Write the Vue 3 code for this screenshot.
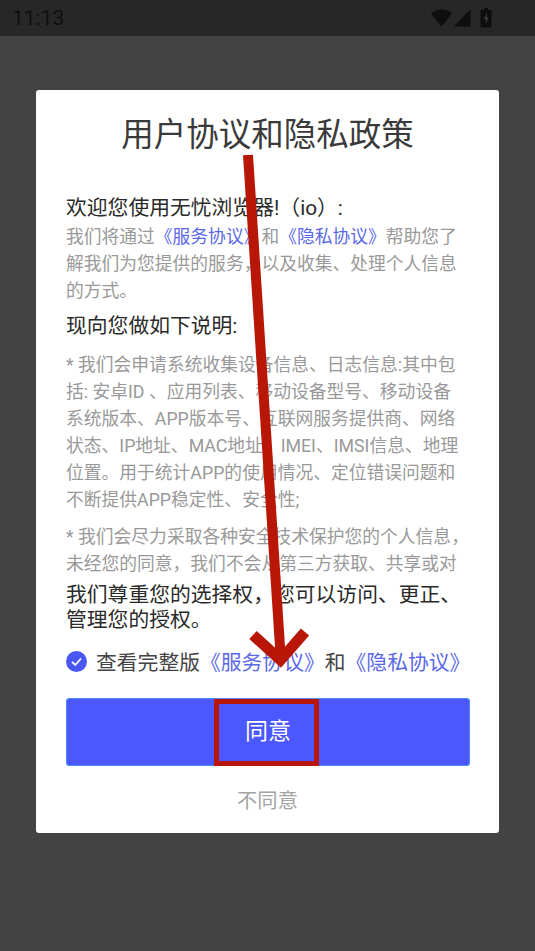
<script setup>
const intro = '我们将通过'
</script>

<template>
  <div class="screen">
    <header class="status">
      <span class="time">11:13</span>
      <div class="status-icons">
        <svg width="21" height="18" viewBox="0 0 21 18"><path d="M0 4.5C3 1.8 6.500 .5 10.500 .5S18 1.800 21 4.500L10.500 17.500Z" fill="#0e0e0e"/></svg>
        <svg width="18" height="18" viewBox="0 0 18 18"><path d="M17.500 .5V17.500H.5Z" fill="#0e0e0e"/></svg>
        <svg class="batt" width="12" height="20" viewBox="0 0 12 20"><path d="M4 0H8V2H11.500V19.500H.5V2H4Z" fill="#0e0e0e"/><path d="M6.800 4.500 3.800 11H5.800V16L8.500 9.500H6.500Z" fill="#3d3d3d"/></svg>
      </div>
    </header>

    <main class="stage">
      <section class="card">
        <h1 class="title">用户协议和隐私政策</h1>

        <div class="scroll">
          <p class="lead">欢迎您使用无忧浏览器!（io）:</p>
          <p class="muted">{{ intro }}<a>《服务协议》</a>和<a>《隐私协议》</a>帮助您了解我们为您提供的服务，以及收集、处理个人信息的方式。</p>
          <p class="lead second">现向您做如下说明:</p>
          <p class="muted item">* 我们会申请系统收集设备信息、日志信息:其中包括: 安卓ID 、应用列表、移动设备型号、移动设备系统版本、APP版本号、互联网服务提供商、网络状态、IP地址、MAC地址、IMEI、IMSI信息、地理位置。用于统计APP的使用情况、定位错误问题和不断提供APP稳定性、安全性;</p>
          <p class="muted next">* 我们会尽力采取各种安全技术保护您的个人信息，未经您的同意，我们不会从第三方获取、共享或对外提供您的信息;</p>
        </div>

        <p class="choice">我们尊重您的选择权，您可以访问、更正、管理您的授权。</p>

        <div class="check-row">
          <svg class="check" width="21" height="21" viewBox="0 0 21 21">
            <circle cx="10.500" cy="10.500" r="10.500" fill="#4b57f5"/>
            <path d="M6 10.800 9.300 14 15 7.500" fill="none" stroke="#fff" stroke-width="1.800"/>
          </svg>
          <span>查看完整版<a>《服务协议》</a>和<a>《隐私协议》</a></span>
        </div>

        <button class="agree">同意</button>
        <button class="decline">不同意</button>
      </section>
    </main>

    <svg class="annotation" width="535" height="951" viewBox="0 0 535 951">
      <path d="M248 155 281 662" fill="none" stroke="#b81607" stroke-width="10"/>
      <path d="M253 635 280.500 660 305 632" fill="none" stroke="#b81607" stroke-width="11"/>
      <rect x="216.500" y="701.500" width="100" height="62" fill="none" stroke="#b81607" stroke-width="5"/>
    </svg>
  </div>
</template>

<style>
html, body { margin: 0; padding: 0; }
</style>

<style scoped>
.screen {
  position: relative;
  width: 535px;
  height: 951px;
  overflow: hidden;
  display: flex;
  flex-direction: column;
  background: #434343;
  font-family: Roboto, "Noto Sans CJK SC", sans-serif;
}
.status {
  height: 36px;
  flex: none;
  display: flex;
  align-items: center;
  justify-content: space-between;
  padding: 0 43px 0 12px;
  background: #272727;
  box-sizing: border-box;
}
.time {
  font-size: 21px;
  color: #0f0f0f;
}
.status-icons { display: flex; align-items: center; gap: 0; }
.status-icons svg:first-child { margin-right: 1px; }
.batt { margin-left: 9px; }
.stage { flex: 1; padding: 54px 36px 0; }
.card {
  height: 743px;
  box-sizing: border-box;
  background: #fff;
  border-radius: 3px;
  padding: 0 30px;
  display: flex;
  flex-direction: column;
}
.title {
  margin: 19px 0 0;
  height: 52px;
  line-height: 52px;
  font-size: 32.500px;
  font-weight: 400;
  text-align: center;
  color: #3a3a3a;
  white-space: nowrap;
}
.scroll {
  height: 386px;
  margin-top: 31px;
  overflow: hidden;
  flex: none;
}
p { margin: 0; }
.lead {
  font-size: 20.800px;
  line-height: 32px;
  color: #2a2a2a;
}
.second { margin-top: 5px; }
.muted {
  font-size: 17.780px;
  line-height: 27px;
  color: #999;
}
.item { margin-top: 10px; max-width: 402px; }
.next { margin-top: 10px; }
a { color: #5a68e8; }
.choice {
  font-size: 20.800px;
  line-height: 25px;
  color: #2a2a2a;
  margin-top: 5px;
}
.check-row {
  display: flex;
  align-items: center;
  gap: 9px;
  margin-top: 11px;
  height: 34px;
  font-size: 20.800px;
  color: #444;
  white-space: nowrap;
}
.check { flex: none; }
.agree {
  width: 404px;
  height: 68px;
  margin-top: 20px;
  flex: none;
  padding: 0 0 6px;
  box-sizing: border-box;
  background: #4b57ff;
  border: 1px solid #4a8dfa;
  border-radius: 3px;
  font: inherit;
  font-size: 23px;
  color: #fff;
}
.decline {
  background: none;
  border: 0;
  padding: 0;
  margin-top: 18px;
  font: inherit;
  font-size: 20.300px;
  line-height: 34px;
  color: #a3a3a3;
}
.annotation {
  position: absolute;
  left: 0;
  top: 0;
  pointer-events: none;
}
</style>
